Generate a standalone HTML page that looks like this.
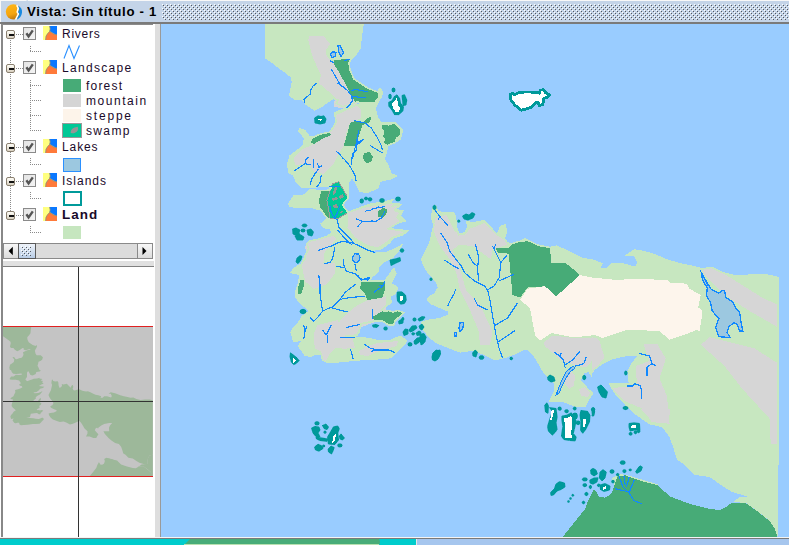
<!DOCTYPE html>
<html><head><meta charset="utf-8">
<style>
*{margin:0;padding:0;box-sizing:border-box}
html,body{width:789px;height:545px;overflow:hidden;background:#fff;font-family:"Liberation Sans",sans-serif;position:relative}
.abs{position:absolute}
#title{left:0;top:0;width:789px;height:22px;background:#c4d4e8;border-top:1px solid #f8f8f8;border-left:1px solid #f8f8f8}
#tline{left:0;top:22px;width:789px;height:2px;background:#7a7a7a}
#ttext{left:27px;top:4px;font-weight:bold;font-size:12px;letter-spacing:0.66px;transform:scaleX(1.1);transform-origin:0 0;color:#000;white-space:nowrap;line-height:16px}
#dots{left:162px;top:4px;width:627px;height:17px;
 background-image:radial-gradient(circle,#808890 0.9px,transparent 1.1px),radial-gradient(circle,#808890 0.9px,transparent 1.1px);
 background-size:4px 4px,4px 4px;background-position:0 0,2px 2px}
#left{left:0;top:24px;width:155px;height:514px;background:#fff}
#lborder{left:1px;top:24px;width:2px;height:514px;background:#888}
#split{left:155px;top:24px;width:5px;height:514px;background:#dedede}
#splitl{left:160px;top:24px;width:1px;height:514px;background:#9a9a9a}
.t{position:absolute;font-size:12px;color:#1a0a2a;white-space:nowrap;line-height:14px}
.chk{position:absolute;width:13px;height:13px;border:1px solid #8a8a8a;background:linear-gradient(135deg,#e4e4e4,#f4f4f4)}
.exp{position:absolute;width:9px;height:9px;border:1px solid #8a8070;border-radius:2px;background:linear-gradient(#fffef8,#d8d0c0)}
.exp:after{content:"";position:absolute;left:1.5px;top:3px;width:5px;height:1.5px;background:#111}
.lic{position:absolute;width:14px;height:14px}
.sw{position:absolute;width:18px;height:13px}
#bottom{left:0;top:539px;width:789px;height:6px;background:#00cccc}
#bline{left:0;top:537px;width:789px;height:2px;background:#7a7a7a;border-top:1px solid #f4f4f4}
</style></head><body>
<div id="title" class="abs"></div>
<svg class="abs" style="left:0;top:0" width="28" height="24" viewBox="0 0 28 24">
 <defs><linearGradient id="og" x1="0" y1="0" x2="0.3" y2="1"><stop offset="0" stop-color="#ffb818"/><stop offset="0.7" stop-color="#f5a510"/><stop offset="1" stop-color="#c88010"/></linearGradient></defs>
 <circle cx="13.4" cy="11.8" r="7.6" fill="url(#og)"/>
 <path d="M17,4.5 Q23.5,8 22.3,13 Q21.2,18.5 15.6,20.3 L22,24 L28,0Z" fill="#c4d4e8"/>
 <path d="M16.6,5.2 Q19.3,8 17.6,10.6 Q16.6,12.4 18.6,13.6 L15.6,19.6" stroke="#fff" stroke-width="1.6" fill="none"/>
 <path d="M18,5.6 Q22.6,8.2 22,12.8 Q21.4,17.6 16.6,19.8 L19.4,14.2 Q18.8,13 18.2,12.6 Q17.8,12 18.8,10.4 Q19.6,8.2 18,5.6Z" fill="#1a8ae0"/>
</svg>
<div id="ttext" class="abs">Vista: Sin título - 1</div>
<svg class="abs" style="left:161px;top:4px" width="628" height="16" shape-rendering="crispEdges">
 <defs><pattern id="dp" width="4" height="4" patternUnits="userSpaceOnUse">
  <rect x="1" y="0" width="1" height="1" fill="#fff"/><rect x="2" y="1" width="1" height="1" fill="#55585c"/>
  <rect x="3" y="2" width="1" height="1" fill="#fff"/><rect x="0" y="3" width="1" height="1" fill="#55585c"/>
 </pattern></defs>
 <rect x="1" y="0" width="627" height="16" fill="url(#dp)"/>
</svg>
<div id="tline" class="abs"></div>
<div id="left" class="abs"></div>
<div id="lborder" class="abs"></div>
<div class="abs" style="left:1px;top:24px;width:152px;height:1px;background:#8a8a8a"></div>

<div id="toc" class="abs" style="left:0;top:0;width:155px;height:260px">
<svg class="abs" style="left:0;top:0" width="155" height="260" shape-rendering="crispEdges">
 <defs>
  <pattern id="vd" width="1" height="2" patternUnits="userSpaceOnUse"><rect x="0" y="0" width="1" height="1" fill="#8a8a8a"/></pattern>
  <pattern id="hd" width="2" height="1" patternUnits="userSpaceOnUse"><rect x="0" y="0" width="1" height="1" fill="#8a8a8a"/></pattern>
 </defs>
 <rect x="10" y="39" width="1" height="172" fill="url(#vd)"/>
 <!-- expander to checkbox -->
 <rect x="15" y="34" width="8" height="1" fill="url(#hd)"/>
 <rect x="15" y="68" width="8" height="1" fill="url(#hd)"/>
 <rect x="15" y="147" width="8" height="1" fill="url(#hd)"/>
 <rect x="15" y="181" width="8" height="1" fill="url(#hd)"/>
 <rect x="15" y="215" width="8" height="1" fill="url(#hd)"/>
 <!-- legend connectors -->
 <rect x="30" y="45" width="1" height="7" fill="url(#vd)"/><rect x="30" y="51" width="12" height="1" fill="url(#hd)"/>
 <rect x="30" y="79" width="1" height="52" fill="url(#vd)"/>
 <rect x="30" y="85" width="12" height="1" fill="url(#hd)"/>
 <rect x="30" y="100" width="12" height="1" fill="url(#hd)"/>
 <rect x="30" y="115" width="12" height="1" fill="url(#hd)"/>
 <rect x="30" y="130" width="12" height="1" fill="url(#hd)"/>
 <rect x="30" y="158" width="1" height="7" fill="url(#vd)"/><rect x="30" y="164" width="12" height="1" fill="url(#hd)"/>
 <rect x="30" y="192" width="1" height="7" fill="url(#vd)"/><rect x="30" y="198" width="12" height="1" fill="url(#hd)"/>
 <rect x="30" y="226" width="1" height="7" fill="url(#vd)"/><rect x="30" y="232" width="12" height="1" fill="url(#hd)"/>
</svg>
<div class="exp" style="left:6px;top:30px"></div>
<div class="chk" style="left:23px;top:27px"><svg width="11" height="11" style="position:absolute;left:0;top:0"><path d="M2.4 5.2 L4.6 8.4 L8.8 2.4" stroke="#555" stroke-width="2.4" fill="none"/></svg></div>
<svg class="lic" style="left:43px;top:26px" width="14" height="14" viewBox="0 0 14 14"><rect width="14" height="14" fill="#ffff80"/><path d="M6.6 0H14V9L10.5 7.6L8.2 6L6.6 5.2L7.2 3Z" fill="#0a78ff"/><path d="M2.6 14 L3 10.2 L4.6 7.6 L6.6 5.6 L8.2 6.2 L10.5 7.8 L14 9 V14Z" fill="#ff7a3a"/><path d="M2.6 14 L3 10.2 L4.6 7.6 L6.6 5.6 L7.2 3 L6.6 0 M6.6 5.6 L8.2 6.2 L10.5 7.8 L14 9" stroke="#8a8a7a" stroke-width="0.8" fill="none"/></svg>
<div class="t" style="left:62px;top:27px;font-weight:normal;letter-spacing:0.75px">Rivers</div>
<div class="exp" style="left:6px;top:64px"></div>
<div class="chk" style="left:23px;top:61px"><svg width="11" height="11" style="position:absolute;left:0;top:0"><path d="M2.4 5.2 L4.6 8.4 L8.8 2.4" stroke="#555" stroke-width="2.4" fill="none"/></svg></div>
<svg class="lic" style="left:43px;top:60px" width="14" height="14" viewBox="0 0 14 14"><rect width="14" height="14" fill="#ffff80"/><path d="M6.6 0H14V9L10.5 7.6L8.2 6L6.6 5.2L7.2 3Z" fill="#0a78ff"/><path d="M2.6 14 L3 10.2 L4.6 7.6 L6.6 5.6 L8.2 6.2 L10.5 7.8 L14 9 V14Z" fill="#ff7a3a"/><path d="M2.6 14 L3 10.2 L4.6 7.6 L6.6 5.6 L7.2 3 L6.6 0 M6.6 5.6 L8.2 6.2 L10.5 7.8 L14 9" stroke="#8a8a7a" stroke-width="0.8" fill="none"/></svg>
<div class="t" style="left:62px;top:61px;font-weight:normal;letter-spacing:1.3px">Landscape</div>
<div class="exp" style="left:6px;top:143px"></div>
<div class="chk" style="left:23px;top:140px"><svg width="11" height="11" style="position:absolute;left:0;top:0"><path d="M2.4 5.2 L4.6 8.4 L8.8 2.4" stroke="#555" stroke-width="2.4" fill="none"/></svg></div>
<svg class="lic" style="left:43px;top:139px" width="14" height="14" viewBox="0 0 14 14"><rect width="14" height="14" fill="#ffff80"/><path d="M6.6 0H14V9L10.5 7.6L8.2 6L6.6 5.2L7.2 3Z" fill="#0a78ff"/><path d="M2.6 14 L3 10.2 L4.6 7.6 L6.6 5.6 L8.2 6.2 L10.5 7.8 L14 9 V14Z" fill="#ff7a3a"/><path d="M2.6 14 L3 10.2 L4.6 7.6 L6.6 5.6 L7.2 3 L6.6 0 M6.6 5.6 L8.2 6.2 L10.5 7.8 L14 9" stroke="#8a8a7a" stroke-width="0.8" fill="none"/></svg>
<div class="t" style="left:62px;top:140px;font-weight:normal;letter-spacing:0.9px">Lakes</div>
<div class="exp" style="left:6px;top:177px"></div>
<div class="chk" style="left:23px;top:174px"><svg width="11" height="11" style="position:absolute;left:0;top:0"><path d="M2.4 5.2 L4.6 8.4 L8.8 2.4" stroke="#555" stroke-width="2.4" fill="none"/></svg></div>
<svg class="lic" style="left:43px;top:173px" width="14" height="14" viewBox="0 0 14 14"><rect width="14" height="14" fill="#ffff80"/><path d="M6.6 0H14V9L10.5 7.6L8.2 6L6.6 5.2L7.2 3Z" fill="#0a78ff"/><path d="M2.6 14 L3 10.2 L4.6 7.6 L6.6 5.6 L8.2 6.2 L10.5 7.8 L14 9 V14Z" fill="#ff7a3a"/><path d="M2.6 14 L3 10.2 L4.6 7.6 L6.6 5.6 L7.2 3 L6.6 0 M6.6 5.6 L8.2 6.2 L10.5 7.8 L14 9" stroke="#8a8a7a" stroke-width="0.8" fill="none"/></svg>
<div class="t" style="left:62px;top:174px;font-weight:normal;letter-spacing:1.0px">Islands</div>
<div class="exp" style="left:6px;top:211px"></div>
<div class="chk" style="left:23px;top:208px"><svg width="11" height="11" style="position:absolute;left:0;top:0"><path d="M2.4 5.2 L4.6 8.4 L8.8 2.4" stroke="#555" stroke-width="2.4" fill="none"/></svg></div>
<svg class="lic" style="left:43px;top:207px" width="14" height="14" viewBox="0 0 14 14"><rect width="14" height="14" fill="#ffff80"/><path d="M6.6 0H14V9L10.5 7.6L8.2 6L6.6 5.2L7.2 3Z" fill="#0a78ff"/><path d="M2.6 14 L3 10.2 L4.6 7.6 L6.6 5.6 L8.2 6.2 L10.5 7.8 L14 9 V14Z" fill="#ff7a3a"/><path d="M2.6 14 L3 10.2 L4.6 7.6 L6.6 5.6 L7.2 3 L6.6 0 M6.6 5.6 L8.2 6.2 L10.5 7.8 L14 9" stroke="#8a8a7a" stroke-width="0.8" fill="none"/></svg>
<div class="t" style="left:62px;top:208px;font-weight:bold;letter-spacing:0.9px;transform:scaleX(1.12);transform-origin:0 0">Land</div>
<svg class="abs" style="left:62px;top:44px" width="20" height="16"><path d="M2 14.5 L7 1.5 L12 14.5 L17.5 1.5" stroke="#2a90ff" stroke-width="1.1" fill="none"/></svg>
<div class="sw" style="left:63px;top:79px;background:#47ab77"></div>
<div class="t" style="left:86px;top:79px;letter-spacing:1.2px">forest</div>
<div class="sw" style="left:63px;top:94px;background:#d5d5d5"></div>
<div class="t" style="left:86px;top:94px;letter-spacing:1.55px">mountain</div>
<div class="sw" style="left:63px;top:109px;background:#fdf4ea"></div>
<div class="t" style="left:86px;top:109px;letter-spacing:1.8px">steppe</div>
<div class="abs" style="left:62px;top:123px;width:20px;height:15px;background:#00c896;border:1px solid #9a9a9a"></div>
<svg class="abs" style="left:62px;top:123px" width="20" height="15"><path d="M8.6 9.8 Q8.4 4.8 15.8 3.8 Q17 8.4 13 9.8 Q10.6 10.8 8.6 9.8Z" fill="#959595"/><path d="M7 15 Q9 13.2 11 15Z" fill="#959595"/></svg>
<div class="t" style="left:86px;top:124px;letter-spacing:1.35px">swamp</div>
<div class="abs" style="left:63px;top:158px;width:18px;height:14px;background:#9cc8e0;border:1px solid #2a90ff"></div>
<div class="abs" style="left:63px;top:191px;width:19px;height:15px;border:2px solid #009a9a;background:#fff"></div>
<div class="sw" style="left:63px;top:226px;background:#c6e6bf"></div>
</div>
<svg class="abs" style="left:161px;top:24px" width="628" height="513" viewBox="161 24 628 513" shape-rendering="crispEdges">
<style>.land,.nc{fill:#c7e7c0}.mtn{fill:#d6d6d6}.for{fill:#47ab77}.swp{fill:#00c896;stroke:#9a9a9a;stroke-width:1}.stp{fill:#fdf5ec}.lake{fill:#9cc8e0;stroke:#1188ff;stroke-width:1.3}.riv{fill:none;stroke:#1188ff;stroke-width:1.15;stroke-linejoin:round}.coast{fill:none;stroke:#c7e7c0;stroke-width:1.6}.isl{fill:#fff;stroke:#00999a;stroke-width:3.2;stroke-linejoin:round}.isd{fill:#00999a;stroke:#00999a;stroke-width:0.9;stroke-linejoin:round}</style>
<rect x="161" y="24" width="628" height="513" fill="#99ccff"/>
<path class="land" d="M265.5,24 L363,24 L361,38 L360,48 L356,54 L351,59 L349,63 L350,70 L354,79 L360,83 L367.5,88 L377.5,92 L380,88.5 L382.5,92 L381,97 L377.5,103 L375,108 L377.5,118 L381,123 L395,123 L402.5,130.5 L400,139 L394,143 L387.5,145.5 L386,153 L384,159 L387.5,165 L391,173.75 L396,176 L391,178.75 L380,181 L378,187.5 L367.5,192.5 L360,191.25 L355,181.25 L352,177 L348.1,183 L348.1,198 L342.5,205 L348.1,212.5 L357.5,208.75 L367.5,205 L371,204 L382.5,202.5 L392.5,200 L390,203 L401,204.4 L395,209.4 L402.5,211 L400,216 L405,221 L398.75,222.5 L388.75,228.75 L401,230 L407.5,231 L402.5,235 L392.5,238 L390,242.5 L381,248.75 L370,250.6 L373.75,253.5 L386.25,252.5 L395,249 L401.25,245.5 L398.75,250 L392.5,257.5 L382.5,262.5 L377.5,267.5 L378.75,271 L371,277.5 L370,281 L385,281 L393.75,268.75 L396,273.75 L392.5,280 L391.25,283.75 L397.5,287.5 L395,293.75 L390,296.25 L391.25,302.5 L383.75,307.5 L381.25,310 L385,311.25 L388.75,310.6 L392.5,312 L397.5,310.6 L403.75,312.5 L400,316.25 L395,321 L393.75,325 L388.75,325 L382.5,321 L373.75,321.25 L361.25,323.75 L358.75,332.5 L357,335 L345,336.25 L357.5,337.5 L370,338.75 L377.5,340.6 L388.75,341.25 L397.5,337.5 L400,336.25 L403.75,338.75 L406.25,341.25 L403.75,345 L398.75,350 L395,353.75 L391.25,357.5 L377.5,358.75 L367.5,358.75 L357.5,360 L350,360.6 L337.5,361.9 L327.5,362.5 L322.5,360 L321.25,353.75 L315,354.4 L310,356.25 L305,355 L298.75,346.25 L302.5,340 L293.75,341.25 L291.25,332.5 L293.75,327.5 L298.75,322.5 L302.5,316.25 L310,311 L300,302.5 L295.6,296.8 L296.25,290 L298.75,282.5 L300,275 L297.5,273.75 L291.25,272.5 L293.75,268.75 L301.8,263.75 L304.4,257.5 L308.75,248.75 L306.8,243.75 L310,241 L317.5,239.4 L327.5,236.25 L332.5,232.5 L330,228.75 L323.75,227.5 L321.25,223.75 L327.5,218.75 L323.75,213.75 L321.25,210 L310,206.9 L298.75,207.5 L290,206.25 L288.75,203.75 L293.75,196.25 L302.5,196.25 L310,190 L321.25,190.6 L329,190.2 L331,188 L329,186 L311.25,187 L301.25,186.8 L296.25,181.25 L293.75,175 L289,172.5 L287.5,162.5 L288.3,164.4 L289.9,156.2 L296.5,151.2 L303.1,146.2 L304.8,138 L299,131.4 L299.8,128.9 L304.8,130.5 L308.9,136.3 L313,137.1 L321.3,133.8 L329.6,132.2 L332.9,128 L336.2,121.4 L334.5,113.2 L349,106.5 L361,104 L357.7,101.6 L349.4,104.9 L342.8,106.6 L336.2,103.3 L337.9,100 L332.9,98.3 L328,101.6 L322,106 L314.7,109.9 L306.4,104.4 L301.8,98.9 L294.4,98.9 L289.9,95.2 L290.8,89.7 L292.6,82.4 L291.7,76.9 L284.4,71.4 L277,65.9 L272.4,62.2 L265.5,57.6 L265.5,24Z"/>
<path class="mtn" d="M309.1,35.6 L323.8,36.5 L330.2,43.9 L325.5,51 L327,57 L333,63 L341.25,70.5 L348.75,83 L355,95.5 L357.5,105.5 L341.25,108 L333.75,106.75 L335,98 L327.5,90.5 L318.75,83 L321,75 L317.4,67.7 L311.9,54.9 L308.2,40.2Z"/>
<path class="mtn" d="M330,133 L335,123 L335,115.5 L357.5,105.5 L361.25,110.5 L361.25,118 L356.25,120.5 L350,123 L346.25,133 L343.75,145.5 L338,155 L333,165 L324,173.75 L315,172.5 L307.5,163.75 L295,165 L294,158 L301,150 L316.25,143Z"/>
<path class="mtn" d="M348.1,212.5 L357.5,210 L367.5,207 L382.5,205 L395,203 L390,207 L398,206 L393,211 L399,213 L396,218 L401,222 L386,229 L398,231 L404,232 L392,237 L386,242 L378,247.5 L367.5,245 L355,237.5 L347.5,227.5Z"/>
<path class="mtn" d="M307.8,242.2 L333.6,235.8 L336.8,239 L324.6,251.9 L323.3,263.4 L334.8,263.4 L335.5,272.4 L327.1,284 L313.6,289.1 L305.3,281.4 L301.4,264.7 L306.6,258.3 L305.3,246.7Z"/>
<path class="mtn" d="M378,298.75 L367.5,300 L357.5,305 L345,315 L338.75,322.5 L337.5,320 L317.5,325 L314,333 L313.75,340 L315,348.75 L321.25,351.25 L322.5,360 L326.25,361 L328.75,355 L335,348 L345,348.75 L355,347.5 L352.5,338.75 L357.5,332.5 L361,327.5 L370,323.75 L378,321 L386.25,312 L386.25,296.25Z"/>
<path class="mtn" d="M358.75,351.25 L367.5,346.25 L377.5,343 L390,341.9 L398.75,340.6 L396.25,346.25 L386.25,348.75 L376.25,352 L367.5,356.25 L360,354.4Z"/>
<path class="for" d="M333.75,60.5 L342.5,59.25 L348.75,59.25 L350,70.5 L354,79.25 L367.5,88 L377.5,92 L377.5,98 L373.75,102.5 L355,101.75 L351,95.5 L345,83 L338.75,71.75 L333.75,64.25Z"/>
<path class="for" d="M356.25,120.5 L362.5,123 L367.5,118 L371.25,117 L370,122 L362.5,125 L360,133 L355,145.5 L343.75,145.5 L347.5,133 L350,123Z"/>
<path class="for" d="M312,139 L321.3,134.3 L329.6,132.7 L331,135 L322,139 L314,144 L311,143Z"/>
<path class="for" d="M382.5,124.8 L389.1,125.6 L395.7,123.1 L400.7,127.2 L399.8,134.7 L395.7,138 L394,143 L389.1,145.4 L384.1,143 L385,139 L383.3,136.3 L384.5,131 L382,128Z"/>
<path class="for" d="M364,153 L370,152 L373,157 L371,162 L366,163 L363,158Z"/>
<path class="for" d="M321.25,191.25 L330,190.6 L326.9,200 L330,218 L327.5,218.75 L323.75,213.75 L321.25,210 L318.75,201.9 L320,196.25Z"/>
<path class="swp" d="M332.5,183.75 L338.75,181.9 L348.1,198 L342.5,205 L348.1,212.5 L337.5,218.75 L330,218 L326.9,200Z"/>
<path fill="#959595" d="M334,188 L338,186 L336,192 L333,195Z M331,199 L336,197 L338,199 L333,201Z M339,196 L343,194 L344,197 L340,199Z M333,205 L337,204 L338,208 L334,208Z M339,212 L343,211 L341,214Z"/>
<path class="for" d="M379,210.5 L383,208 L386.5,209 L387,212.5 L385,216 L382,218 L378,216.5 L377.5,213Z"/>
<path class="for" d="M361.25,282.5 L385,281.25 L385,290 L382.5,297.5 L367.5,300 L365,293.75 L360,288.75Z"/>
<path class="for" d="M300,280 L304.4,280.6 L303.75,286.25 L301.25,293.75 L297.5,294.4 L297.5,287.5Z"/>
<path class="for" d="M372.5,317 L382.5,311 L385,311.25 L388.75,310.6 L392.5,312 L397.5,310.6 L403.75,312.5 L400,316.25 L395,321 L393.75,325 L388.75,325 L382.5,321 L373.75,320Z"/>
<path class="land" d="M433.2,207.4 L435.6,205.8 L437.3,211.6 L444.7,213.2 L452.1,212.4 L453,212.4 L455.4,216.5 L456.3,226.4 L458.7,234.7 L464.5,233 L467.8,228 L467,221.5 L472.8,223.1 L484.3,220.6 L490.9,228 L497.5,234.7 L500.8,226.4 L505,224.8 L506.6,232.2 L504.1,238 L507.4,243 L511.25,243.75 L520,241.25 L525,238.75 L537.5,245 L550,247.5 L556.25,246.25 L565,250 L575,255 L582.5,258.75 L592,260 L602,263.75 L599.5,268.75 L607,268.75 L612,263.75 L622,263.75 L635.75,267.5 L638.25,262.5 L634.5,255 L627,255 L634.5,250 L642,251.25 L652,253.75 L667,260 L679.5,263.75 L692,266.25 L702,268.75 L712,267.5 L722,272.5 L737,276.25 L752,275 L767,275 L778.25,277.5 L778.25,464 L767.25,466.4 L762.3,474 L759.8,484 L761,494 L749.8,496.3 L732.4,491.3 L722.4,485 L710,476.4 L695,474 L685,464 L677.5,459 L673.75,446.5 L670,436.5 L662.5,426.5 L649.5,423.5 L637,414.75 L627,406 L614.5,392.25 L609.5,383.5 L629.5,383.5 L628.25,371 L632,363.5 L639.5,354.75 L629.5,354.75 L612,358.5 L602,363.5 L592,371 L591.25,375 L588.75,371.25 L583.75,372.5 L580,380 L587.5,388.75 L592.5,393.5 L587.5,401 L585,406 L575,406 L562.5,401 L550,401 L555,391 L555,383.5 L545,373.5 L542.5,369.75 L537.5,361 L532.5,353.5 L527.5,348.5 L522.5,349.75 L515,353.5 L505,357.25 L495,359.75 L482.5,353.5 L473.4,350 L460.6,351.7 L455,350 L445.9,346.2 L436.7,342.6 L429.4,337 L423.9,329.7 L422,322.4 L427.5,320.6 L440.4,318.7 L448.6,315 L449.5,311.4 L443.1,308.6 L438.5,306.8 L430.3,303.1 L427.5,299.4 L429.4,296.7 L434.9,294 L438.5,287.5 L436.7,282 L429.4,273.8 L424.8,267.3 L422,260 L421.6,259.4 L424.9,252.8 L429.9,242.9 L434,224.8 L431.5,218.2Z"/>
<path class="mtn" d="M434.8,218.2 L446.4,214.9 L454.6,231.4 L464.5,235.5 L469.5,228.9 L484.3,223.1 L494.2,233 L504.1,239.6 L507.4,244.6 L497.5,247.9 L492.6,249.5 L490.9,259.4 L484.3,254.5 L472.8,246.2 L459.6,244.6 L452,250 L458,263 L462,276 L466,290 L480,305 L492.5,331.25 L490,345 L480,345 L478.75,331.25 L470,310 L460,290 L456.3,272.6 L449.7,259.4 L439.8,246.2 L434,232Z"/>
<path class="for" d="M495,247.5 L508.75,247.5 L513.75,242.5 L527.5,241.25 L535,243.75 L537.5,246.25 L550,247.5 L551.25,262.5 L565,262.5 L578.75,273.75 L578.75,283.75 L556.25,296.25 L545,286.25 L527.5,287.5 L520,297.5 L512.5,295 L510,267.5 L508.75,253.75 L497.5,252.5Z"/>
<path class="stp" d="M520,300 L527.5,288.75 L545,286.25 L556.25,296.25 L580,275 L592,277.5 L617,280 L634.5,278.75 L667,280 L669.5,282.5 L687,283.75 L689.5,288.75 L700.75,295 L698.25,307.5 L702,310 L702.5,313 L699.5,331.25 L697,329.75 L684.5,334.75 L669.5,339.75 L659.5,331 L627,329.75 L602.5,338 L595,335 L573.75,337.5 L551.25,333 L540,340.6 L535,335 L530,308Z"/>
<path class="mtn" d="M543.75,342.5 L552.5,335.6 L573.75,338 L596.25,337.5 L600,342.5 L597.5,353.75 L588.75,365 L585,367.5 L575,365 L562.5,361.25 L552.5,352.5 L545,346.25Z"/>
<path class="mtn" d="M643.25,343.5 L657,343.5 L665.75,358.5 L659.5,378.5 L667,396 L669.5,423.5 L652,422.25 L642,408.5 L624.5,401 L612,388 L637,386 L635.75,366 L649.5,361Z"/>
<path class="mtn" d="M700.75,344.75 L709.5,337.25 L754.5,348.5 L778.25,363.5 L778.25,443.5 L770.75,443.5 L769.5,418.5 L742,388.5 L724.5,366Z"/>
<path class="mtn" d="M702,270 L712,267.5 L722,272.5 L742,285 L762,297.5 L778.25,305 L778.25,327.5 L752,312.5 L732,300 L717,287.5 L704.5,275Z"/>
<path class="mtn" d="M565,374 L571,371 L575,376 L574,386 L569,389 L565,384Z"/>
<path class="mtn" d="M579,389 L586,387 L591,391 L588,397 L581,396Z"/>
<path class="mtn" d="M640,409 L670,409 L668.75,424 L650,419Z"/>
<path class="mtn" d="M592,337.25 L599.5,341 L604.5,357.25 L592,373.5Z"/>
<path class="lake" d="M701.6,273.2 L708.2,284.7 L711.5,289.7 L718.9,293 L722.2,290.5 L724.7,290.5 L725.5,297.1 L732.9,302 L735.4,307.8 L739.5,311.9 L741.2,322.7 L742.8,330.9 L739.5,330.9 L737,324.3 L733.7,322.7 L728.8,326.8 L727.1,332.6 L730.4,337.5 L718.9,336.7 L715.6,327.6 L718.9,318.5 L712.3,311.1 L710.6,302.9 L706.5,295.4 L707.3,288 L702.4,279.8Z"/>
<path class="land nc" d="M759.8,484 L761,494 L749.8,496.3 L740,497 L733,502 L746,503 L757,511 L770,521 L777.3,536 L778.25,536 L778.25,464 L767.25,466.4 L762.3,474Z"/>
<path class="land nc" d="M612,478 L620,474 L630,476 L640,479 L650,482 L658,484.5 L657.5,487 L647.5,484.7 L635,481 L625,477.5 L615,487Z"/>
<path class="for ov" d="M562.5,537 L575,521.5 L585,509 L588.75,499 L593.75,489 L596.25,491.5 L598.75,496.5 L605,497.75 L611.25,494 L615,484 L617.5,476.5 L625,475.25 L635,479 L647.5,482.75 L657.5,485.25 L670,496.5 L690,504 L710,509 L720,510 L725,507.6 L731.1,503.3 L746.1,503.3 L757.3,511.3 L769.8,521.3 L774.8,528.8 L777.3,537Z"/>
<path class="isl" d="M510.6,94.4 L512.2,93.3 L514.4,95.2 L519,92.5 L525,92.2 L530.4,92.2 L535.7,92.5 L539.5,93.3 L540.3,90.3 L543.3,89.9 L545.6,92.9 L549.4,94.8 L547.1,97.1 L543.7,98.3 L542.6,104.3 L539.5,105.5 L538.4,102.4 L535.7,102.4 L530.4,107.4 L524.3,109.3 L521.3,110 L515.2,105.1 L511.4,100.5 L510.3,98.3Z"/>
<path class="coast" d="M265.5,24 L363,24 L361,38 L360,48 L356,54 L351,59 L349,63 L350,70 L354,79 L360,83 L367.5,88 L377.5,92 L380,88.5 L382.5,92 L381,97 L377.5,103 L375,108 L377.5,118 L381,123 L395,123 L402.5,130.5 L400,139 L394,143 L387.5,145.5 L386,153 L384,159 L387.5,165 L391,173.75 L396,176 L391,178.75 L380,181 L378,187.5 L367.5,192.5 L360,191.25 L355,181.25 L352,177 L348.1,183 L348.1,198 L342.5,205 L348.1,212.5 L357.5,208.75 L367.5,205 L371,204 L382.5,202.5 L392.5,200 L390,203 L401,204.4 L395,209.4 L402.5,211 L400,216 L405,221 L398.75,222.5 L388.75,228.75 L401,230 L407.5,231 L402.5,235 L392.5,238 L390,242.5 L381,248.75 L370,250.6 L373.75,253.5 L386.25,252.5 L395,249 L401.25,245.5 L398.75,250 L392.5,257.5 L382.5,262.5 L377.5,267.5 L378.75,271 L371,277.5 L370,281 L385,281 L393.75,268.75 L396,273.75 L392.5,280 L391.25,283.75 L397.5,287.5 L395,293.75 L390,296.25 L391.25,302.5 L383.75,307.5 L381.25,310 L385,311.25 L388.75,310.6 L392.5,312 L397.5,310.6 L403.75,312.5 L400,316.25 L395,321 L393.75,325 L388.75,325 L382.5,321 L373.75,321.25 L361.25,323.75 L358.75,332.5 L357,335 L345,336.25 L357.5,337.5 L370,338.75 L377.5,340.6 L388.75,341.25 L397.5,337.5 L400,336.25 L403.75,338.75 L406.25,341.25 L403.75,345 L398.75,350 L395,353.75 L391.25,357.5 L377.5,358.75 L367.5,358.75 L357.5,360 L350,360.6 L337.5,361.9 L327.5,362.5 L322.5,360 L321.25,353.75 L315,354.4 L310,356.25 L305,355 L298.75,346.25 L302.5,340 L293.75,341.25 L291.25,332.5 L293.75,327.5 L298.75,322.5 L302.5,316.25 L310,311 L300,302.5 L295.6,296.8 L296.25,290 L298.75,282.5 L300,275 L297.5,273.75 L291.25,272.5 L293.75,268.75 L301.8,263.75 L304.4,257.5 L308.75,248.75 L306.8,243.75 L310,241 L317.5,239.4 L327.5,236.25 L332.5,232.5 L330,228.75 L323.75,227.5 L321.25,223.75 L327.5,218.75 L323.75,213.75 L321.25,210 L310,206.9 L298.75,207.5 L290,206.25 L288.75,203.75 L293.75,196.25 L302.5,196.25 L310,190 L321.25,190.6 L329,190.2 L331,188 L329,186 L311.25,187 L301.25,186.8 L296.25,181.25 L293.75,175 L289,172.5 L287.5,162.5 L288.3,164.4 L289.9,156.2 L296.5,151.2 L303.1,146.2 L304.8,138 L299,131.4 L299.8,128.9 L304.8,130.5 L308.9,136.3 L313,137.1 L321.3,133.8 L329.6,132.2 L332.9,128 L336.2,121.4 L334.5,113.2 L349,106.5 L361,104 L357.7,101.6 L349.4,104.9 L342.8,106.6 L336.2,103.3 L337.9,100 L332.9,98.3 L328,101.6 L322,106 L314.7,109.9 L306.4,104.4 L301.8,98.9 L294.4,98.9 L289.9,95.2 L290.8,89.7 L292.6,82.4 L291.7,76.9 L284.4,71.4 L277,65.9 L272.4,62.2 L265.5,57.6 L265.5,24Z"/><path class="coast" d="M433.2,207.4 L435.6,205.8 L437.3,211.6 L444.7,213.2 L452.1,212.4 L453,212.4 L455.4,216.5 L456.3,226.4 L458.7,234.7 L464.5,233 L467.8,228 L467,221.5 L472.8,223.1 L484.3,220.6 L490.9,228 L497.5,234.7 L500.8,226.4 L505,224.8 L506.6,232.2 L504.1,238 L507.4,243 L511.25,243.75 L520,241.25 L525,238.75 L537.5,245 L550,247.5 L556.25,246.25 L565,250 L575,255 L582.5,258.75 L592,260 L602,263.75 L599.5,268.75 L607,268.75 L612,263.75 L622,263.75 L635.75,267.5 L638.25,262.5 L634.5,255 L627,255 L634.5,250 L642,251.25 L652,253.75 L667,260 L679.5,263.75 L692,266.25 L702,268.75 L712,267.5 L722,272.5 L737,276.25 L752,275 L767,275 L778.25,277.5 L778.25,464 L767.25,466.4 L762.3,474 L759.8,484 L761,494 L749.8,496.3 L732.4,491.3 L722.4,485 L710,476.4 L695,474 L685,464 L677.5,459 L673.75,446.5 L670,436.5 L662.5,426.5 L649.5,423.5 L637,414.75 L627,406 L614.5,392.25 L609.5,383.5 L629.5,383.5 L628.25,371 L632,363.5 L639.5,354.75 L629.5,354.75 L612,358.5 L602,363.5 L592,371 L591.25,375 L588.75,371.25 L583.75,372.5 L580,380 L587.5,388.75 L592.5,393.5 L587.5,401 L585,406 L575,406 L562.5,401 L550,401 L555,391 L555,383.5 L545,373.5 L542.5,369.75 L537.5,361 L532.5,353.5 L527.5,348.5 L522.5,349.75 L515,353.5 L505,357.25 L495,359.75 L482.5,353.5 L473.4,350 L460.6,351.7 L455,350 L445.9,346.2 L436.7,342.6 L429.4,337 L423.9,329.7 L422,322.4 L427.5,320.6 L440.4,318.7 L448.6,315 L449.5,311.4 L443.1,308.6 L438.5,306.8 L430.3,303.1 L427.5,299.4 L429.4,296.7 L434.9,294 L438.5,287.5 L436.7,282 L429.4,273.8 L424.8,267.3 L422,260 L421.6,259.4 L424.9,252.8 L429.9,242.9 L434,224.8 L431.5,218.2Z"/><g class="riv">
<path d="M316.5,83.3 L313,86 L311,89.7 L310,94.3 L304.5,98.9 L302.7,99.3 M304.5,98.9 L304.5,102.6"/>
<path d="M331.25,69.25 L335,75.5 L340,84.25 L347.5,90.5 L351.25,95.5 L352.5,100.5 L350,104.25 L346.25,108 M337.5,83 L342.5,86.75 M351,91 L355,89.25 L367.5,91.75 M352,97 L355,96.75 L366.25,98 M330,60.5 L333.75,63 M343.75,60.5 L350,59.25"/>
<path d="M353.75,120.5 L365,123 L371.25,128 L377.5,138 L381.25,145.5 L382.5,150.5 M358.75,130.5 L356.25,143 L353.75,153 L352.5,159.25 M356.25,143 L363.75,139.25 M370,145.5 L382.5,153 M337.5,151.75 L343.75,159.25"/>
<path d="M294.4,170.6 L301.25,166.25 L305,163.75 L306.25,158.75 L308.75,157.5 M305,163.75 L311.25,165 M313.75,158.75 L313.75,167.5 M317.5,163 L318.75,167.5 L322.5,165.6 M318.75,168.75 L315,173.75 L311.25,180 L310.6,185 M321.25,175 L320,182.5 L316.9,186.9"/>
<path d="M336.25,151.25 L345,160 L350,166.25 L355,175 L356.25,181.25 M357.5,140 L356.25,150 L352.5,153.75 L351.25,165 M357,145 L363,140"/>
<path d="M328.75,186.25 L340,186.25 M330,206.25 L331.25,212.5 L333.75,217.5 L337.5,220 L338.75,227.5 L345,233.75 L351.25,240 L353.75,243 M340,205 L337.5,212.5 L335,217.5 M337.5,230 L346.25,240 L352,245"/>
<path d="M365,211.25 L368,210.5 L371.25,210 L373,208.5 L375,208.75 L378,207 L381.25,207.5 L385,206.25 M355.6,218.75 L359,220 L362.5,221.25 L367.5,221.9 L372,221 L376.25,221.25 L381.25,218 L383,215 L385,211.25 M357.5,226.9 L360,224 L362.5,221.25"/>
<path d="M318,250.6 L325,248 L332.5,245.6 L338.75,242.5 L342.5,241.25 L352.5,243 L357.5,245 L367.5,250 L375,252.5 M335,247.5 L333.75,252.5 L332.5,258.75 L330,262.5 L323.75,263.75"/>
<path d="M343.75,258.75 L343.75,265 L346.25,271.25 L355,273.75 L360,278.75 L367.5,280 L370,277.5 M336.25,266.25 L343.75,267.5 M355,264 L356.25,271.25"/>
<path d="M318.75,275 L320,285 L320,293.75 L321.25,302.5 L322.5,311.25 L317.5,317.5 L313.75,321.25 L310,317.5 M322.5,311.25 L327.5,308.75 L332.5,306.9 L340,299.4 L345,292.5 L356.25,283.75 M340,299.4 L350,297.5 L365,296.25 M332.5,308 L341.25,310.6 L348.1,311.9"/>
<path d="M303.75,325 L305,331.25 L303.75,338.75 M306.9,326.25 L305,331 M322.5,330 L326.25,335 L331.25,325 M327.5,335 L327.5,343 M346.25,327.5 L360,324.4 M340,337.5 L355,337.5 M372.5,308.75 L372.5,318.75 M357.5,275 L361.25,280 L368.75,277.5"/>
<path d="M364.4,344.4 L371.25,348.75 L381.25,350 L388.75,350 L395,352.5 M370.6,351.25 L381.25,350 M350.6,349.4 L353.1,358.75"/>
<path d="M373.75,292.5 L378.75,288.75 L382.5,286.25 L385,281.25 M378.75,285 L382.5,286.25"/>
<path d="M434.8,209.9 L439.8,216.5 L448,225.6 M438.1,219.8 L439.8,216.5"/>
<path d="M440.6,233 L447.2,242.9 L449.7,251.2 L461.2,266 L464.5,272.6 L474.4,280.9 L484.3,285.8 L487.6,290 L490,300 L493,318 L496,335 L499,348 L502.5,358 M444.7,260.2 L452,265 L459.6,269.3 M475.2,243.7 L478.5,256.1 L477.7,269.3 L478.5,280.9 M467.8,253.6 L473.6,263.5 L477.7,266 M495.9,243.7 L494,249 M492.6,246.2 L500.8,262.7 L499.2,277.6 L494.2,285.8 L487.6,290 M507.4,254.5 L500.8,262.7 M514,274.3 L499.2,280.9 M473.75,297.5 L477.5,305 L487.5,310 M517.5,303 L507.5,318 L494,326 M515,330.5 L498,342 M455.5,289.4 L454,294 L451,299 L447.7,305.9"/>
<path d="M553.75,351.9 L560,356.25 L563.75,360 L564.4,366.25 L566,368 M561.25,352.5 L560,356.25 M580,351.25 L572.5,360 L565,365 M586.25,356.9 L583.75,363.75 L575,366.25"/>
<path d="M639.5,353.5 L649.5,356 L652,363.5 L647,367.25 L647,376 M652,363.5 L655.75,366 M627,386 L633.25,386 L634.5,383.5 L640.75,386 L642,398.5"/>
<path d="M619,476 L622.8,486.7 L629.1,493 L634.2,500.6 L641.8,503.8 M624,476 L625.3,485.4 M629.1,477.2 L626.6,486.7 M634.2,480.3 L630.4,489.2 L629.1,493 M615.2,488.6 L622.8,490.5 L629,492"/>
<path d="M700,270 L704,278 L708,286"/>
</g>
<path class="lake" d="M573,366 L566,372 L561,382 L558,390 L556,395 L559,393 L562,386 L566,378 L570,372 L575,368Z" style="stroke-width:1"/>
<path class="lake" d="M352.5,257 L355,253.75 L358.5,254 L360,257 L359,261 L356,263 L353,261Z"/>
<path class="lake" d="M330.5,54 L333,51.75 L336,52.5 L335,56.5 L331.5,57.5Z"/>
<path class="lake" d="M338,46 L340,45.5 L342,49 L343.5,53 L341,56.5 L339,53 L338.5,49Z"/>
<path class="lake" d="M460,323 L463.5,322.6 L463,328 L460,331.5 L459,328Z"/><path class="lake" d="M454.5,333 L456.5,332.5 L456,336 L454.5,336Z"/>
<path class="lake" d="M455,324 L458,323 L459,330 L456,335 L455,330Z" style="display:none"/>
<g class="isd">
<ellipse cx="393.5" cy="90" rx="1.5" ry="2"/><ellipse cx="390" cy="96.5" rx="1.4" ry="2.3"/><path d="M402,95.5 L404.5,94.7 L406.8,100 L406,105 L403,105.7 L402.5,100Z"/>
<!-- Iron islands -->
<path d="M292.5,229 L296,228 L300,230 L299,233 L301,236 L297,236 L293,234Z"/>
<ellipse cx="304.5" cy="225.5" rx="2.5" ry="1.5"/>
<ellipse cx="303" cy="230.5" rx="2" ry="1.5"/>
<path d="M307,230 L311,229 L313.5,232 L312,236 L308,235Z"/>
<path d="M295,236 L301,235 L304,237 L303,240 L297,240Z"/>
<path d="M296,262 L297,258 L300,255.6 L302,256.5 L301,260 L298,263.75Z"/>
<ellipse cx="303" cy="311.5" rx="3" ry="2.2"/>
<!-- Bite islands -->
<ellipse cx="361.8" cy="201" rx="1.8" ry="2.1"/><ellipse cx="366" cy="198.5" rx="1.6" ry="1.4"/><ellipse cx="370" cy="199.3" rx="1.9" ry="1.7"/>
<ellipse cx="382" cy="200.5" rx="2.4" ry="2"/>
<ellipse cx="398" cy="199" rx="2.5" ry="2"/>
<ellipse cx="402" cy="250.5" rx="1.8" ry="1.8"/>
<path d="M390,260 L395,259 L400,257.5 L400.6,261 L396,263 L391,265.6Z"/>
<ellipse cx="431" cy="279.3" rx="1.3" ry="1.3"/>
<!-- Stormlands / stepstones -->
<path d="M372.5,325 L376,324.4 L378.75,325.5 L377,327.5 L373,327Z"/>
<ellipse cx="385.6" cy="328.5" rx="1.9" ry="1.6"/>
<path d="M399,323 L401,319.5 L403,317 L404,319 L402,323 L399.5,324Z"/>
<ellipse cx="401" cy="321.8" rx="2" ry="1.6"/>
<path d="M403,332 L405,329 L408,329.5 L408,334 L404,335.6Z"/>
<path d="M409,330 L412,326 L416,325.6 L417,328 L413,331 L410,332Z"/>
<ellipse cx="414.5" cy="319.5" rx="1.6" ry="1.6"/>
<path d="M418,319 L422,316.5 L425,317 L423,320 L419,321Z"/>
<path d="M419,326 L422,324 L424,327 L422,330 L420,329Z"/>
<path d="M416,333 L419,331 L421,332 L420,335 L417,335.6Z"/>
<path d="M414,341 L417,338 L420,337.5 L419.5,342 L416,344.4 L414.5,344Z"/>
<path d="M421,337 L424,335.5 L426,337.5 L424,340 L421.5,340Z"/>
<ellipse cx="410" cy="344.3" rx="2" ry="1.8"/>
<ellipse cx="413.2" cy="333.8" rx="1.5" ry="1.2"/>
<ellipse cx="422.5" cy="343.3" rx="0.9" ry="0.9"/>
<path d="M432,357 L433,353 L436,351 L440,350 L440.6,354 L438,359 L435,361 L432.5,360Z"/>
<path d="M398.75,321 L402,320 L403,323 L399,323.75Z"/>
<!-- south islands -->
<ellipse cx="317" cy="423.3" rx="2.2" ry="1.7"/>
<path d="M311.5,428 L315,426.4 L319,427 L320,430 L318,433 L320,436.7 L316,436.7 L313,433Z"/>
<path d="M316,437 L322,438 L328,439 L327,441.4 L320,440.5 L316.5,439Z"/>
<path d="M322.5,425.5 L326,424 L328.6,427 L327,429.7 L324,428.5Z"/>
<ellipse cx="325" cy="432.2" rx="1.2" ry="1.2"/>
<path d="M339.3,436 L341,433.9 L344.5,438 L342.5,440 L340,439Z"/>
<ellipse cx="339.8" cy="445.4" rx="2.3" ry="1.6"/>
<path d="M314.5,447 L318,444.2 L322,446 L323,448.5 L319,451.2 L315.5,450Z"/>
<path d="M328.1,449 L331,446 L334.2,447.5 L333,451 L331.5,454 L328.5,452Z"/>
<ellipse cx="323.6" cy="446" rx="1.2" ry="1"/>
<!-- Essos NW islands -->
<path d="M462.5,216 L466,214 L469,215 L472,212.5 L475,214 L473,218 L468,220 L464,219Z"/>
<ellipse cx="434.5" cy="207.5" rx="1.6" ry="2.2"/>
<ellipse cx="458.7" cy="221.2" rx="1.2" ry="1.2"/>
<!-- Essos W islands -->
<path d="M420,334 L424,333.5 L426,337 L425,342 L421,345 L420,340Z"/>
<path d="M433,353 L436,350 L440,351 L439.5,356 L437,360 L433,358Z"/>
<path d="M472.5,353 L475,350 L477.5,352 L476,357 L473,356Z"/>
<ellipse cx="481.5" cy="357.5" rx="2.3" ry="2"/>
<ellipse cx="511.3" cy="358.5" rx="1.3" ry="1.3"/>
<path d="M547.5,377 L550,375 L554,377 L555,381 L551,382 L548,380Z"/>
<ellipse cx="584.2" cy="377.5" rx="1.6" ry="2.2"/>
<path d="M597.5,387 L601,385 L604,388 L607.5,392 L606,398 L602,397 L599,392Z"/>
<ellipse cx="625.5" cy="408" rx="2.5" ry="1.6"/>
<ellipse cx="625.8" cy="373" rx="1.3" ry="2"/>
<ellipse cx="593.3" cy="411.5" rx="1.3" ry="4"/>
<!-- Essos S island blobs -->
<path d="M544.7,405 L547,402.8 L548.5,406 L548,413.3 L545.5,412Z"/>
<ellipse cx="559.7" cy="408.7" rx="1.7" ry="1.7"/>
<ellipse cx="566.6" cy="411.2" rx="1.9" ry="1.6"/>
<ellipse cx="574.7" cy="408.5" rx="1.5" ry="1.5"/>
<ellipse cx="578.1" cy="422.8" rx="1.9" ry="1.9"/>
<ellipse cx="593.1" cy="409.5" rx="1.7" ry="2"/>
<ellipse cx="592.9" cy="415.4" rx="0.9" ry="0.8"/>
<ellipse cx="575" cy="416" rx="2.5" ry="3"/>
<!-- south forest islands -->
<path d="M550.5,492.5 L554.5,488.5 L556,484 L559.5,481.6 L564.5,483 L565,487 L561,489.5 L557,491 L553.5,495 L551,495.5Z"/>
<ellipse cx="568.5" cy="501.5" rx="1" ry="1"/><ellipse cx="570.5" cy="498.5" rx="1" ry="1"/><ellipse cx="572.8" cy="495.3" rx="1" ry="1"/>
<ellipse cx="584.8" cy="479.4" rx="2.5" ry="1.6"/>
<ellipse cx="584.8" cy="485.1" rx="1.9" ry="1.6"/>
<path d="M589.8,480 L594,478 L598,477.8 L597,482 L593,484.2 L590,483Z"/>
<path d="M590.5,470 L593,468.3 L596,470 L597.4,474 L594,475.9 L591,474Z"/>
<path d="M600,472 L603,469.6 L606.3,472 L605,478 L602,481 L599.3,478Z"/>
<ellipse cx="612" cy="471.5" rx="2" ry="1.9"/>
<ellipse cx="624.4" cy="471.1" rx="1.6" ry="1.6"/>
<ellipse cx="630.3" cy="469.9" rx="1.3" ry="0.9"/>
<path d="M635.5,472 L638,468 L640,465.8 L642.4,467 L641,471 L637,473.4Z"/>
<ellipse cx="622.7" cy="462.6" rx="2.5" ry="1.9"/>
<ellipse cx="617.7" cy="474.7" rx="1.3" ry="1.3"/>
<ellipse cx="613" cy="481.6" rx="1.5" ry="1.3"/>
<ellipse cx="590.4" cy="487" rx="1.2" ry="1.6"/>
<ellipse cx="598.7" cy="485.3" rx="1.3" ry="1.3"/>
<ellipse cx="586.4" cy="494" rx="1.6" ry="1.6"/>
<ellipse cx="583.5" cy="502.5" rx="1.3" ry="1.3"/>
</g>
<g class="isl"><path d="M510.6,94.4 L512.2,93.3 L514.4,95.2 L519,92.5 L525,92.2 L530.4,92.2 L535.7,92.5 L539.5,93.3 L540.3,90.3 L543.3,89.9 L545.6,92.9 L549.4,94.8 L547.1,97.1 L543.7,98.3 L542.6,104.3 L539.5,105.5 L538.4,102.4 L535.7,102.4 L530.4,107.4 L524.3,109.3 L521.3,110 L515.2,105.1 L511.4,100.5 L510.3,98.3Z" style="stroke-width:2.5"/></g>
<g class="isd">
<path d="M388.6,102.3 L392,100.8 L394.3,96.5 L397,94.8 L399.6,98.4 L400.6,103.2 L403.6,107 L402.8,111.2 L398.8,114.6 L394.5,114.6 L392,110.2 L388.8,106.2Z"/>
<path d="M397.3,292 L401.8,291.8 L405.5,295 L406.3,300 L404.5,303.5 L400.5,304.2 L397.5,301 L397,296Z"/>
<path d="M290.5,352.8 L292.3,354.2 L296.5,357.4 L299.2,360.6 L296.5,363.3 L293.7,364.7 L291.4,362.4 L290,356.5Z"/>
<path d="M327.5,437 L330.5,432 L333.5,426.8 L337.8,426 L339.3,428.7 L337.8,433 L338.6,440 L334.8,444.6 L328.4,444 Z"/>
<path d="M549.5,407.5 L556.1,408.5 L557.1,417.1 L556.1,422.8 L557.1,429.5 L555.2,432.4 L552.3,435.2 L548.5,431.4 L547.5,426.6 L549.5,420 L552.3,411.4Z"/>
<path d="M561.9,416.1 L566.6,415.2 L571.4,412.8 L574.3,417.1 L576.2,420.9 L574.3,429.5 L573.3,433.3 L576.2,437.1 L575.2,440.9 L569.5,440.5 L563.8,439.5 L561.4,436.2 L562.8,426.6 L561.9,420Z"/>
<path d="M580.9,410.4 L587.6,411.4 L590,415.2 L589.5,421.9 L585.7,429.5 L582.8,433.3 L580.5,430.4 L580.9,421.9 L580,415.2Z"/>
<path d="M629,423.5 L634,422.8 L639.5,423.5 L639.9,430.7 L635,430 L630,431 L629,427Z"/>
<ellipse cx="630.6" cy="433.8" rx="1.5" ry="1.5"/><ellipse cx="635.5" cy="432.3" rx="1.4" ry="1.5"/><ellipse cx="638.6" cy="431.4" rx="1.3" ry="1.3"/>
<path d="M600,485 L605,483.5 L610,486 L609.5,490 L604,491.5 L600.5,489.5Z"/>
<path d="M314.5,118 L318,115.8 L321,116.5 L324,115.8 L326,119 L325,123 L320,124 L315,123Z"/>
</g>
<g fill="#fff">
<path d="M391.6,103.5 L394.5,101.5 L396.5,98 L397.8,102 L398.5,106 L400.3,108.5 L399,111.8 L395.5,112 L393.5,108.5Z"/>
<ellipse cx="401.2" cy="298.2" rx="1.7" ry="2.8"/>
<path d="M293,358 L296,361 L293.5,363Z"/>
<path d="M332.3,442.8 L333,437 L335.5,434.3 L336.5,436 L334.8,438.5 L335,441Z"/>
<path d="M551.5,410.5 L554.5,410 L552.5,417 L551,421.5 L550.3,419 L551,414Z"/>
<path d="M564,418 L568,417.5 L571,415.5 L572.5,420 L572,428 L571,433 L572.5,437.5 L568,438 L565,437.5 L564.5,428 L564.5,422Z"/>
<path d="M583,419 L586,418.5 L585.5,424 L584,428 L583,425Z"/>
<path d="M631.4,425.6 L636.2,425.2 L636.2,427.6 L631.4,427.6Z"/>
<path d="M603,487 L606,486 L605.5,489 L603.5,489.5Z"/>
<path d="M318,119.5 L320,118.5 L322,119.5 L320.5,121Z"/>
</g>
</svg><svg class="abs" style="left:0;top:0" width="155" height="545">
<rect x="3" y="326" width="150" height="151" fill="#c4c4c4"/>
<clipPath id="ovc"><rect x="3" y="327" width="150" height="149"/></clipPath>
<g clip-path="url(#ovc)"><g transform="matrix(0.2924,0,0,0.2924,-74.8,319.2)"><path fill="#9db89a" d="M265.5,24 L363,24 L361,38 L360,48 L356,54 L351,59 L349,63 L350,70 L354,79 L360,83 L367.5,88 L377.5,92 L380,88.5 L382.5,92 L381,97 L377.5,103 L375,108 L377.5,118 L381,123 L395,123 L402.5,130.5 L400,139 L394,143 L387.5,145.5 L386,153 L384,159 L387.5,165 L391,173.75 L396,176 L391,178.75 L380,181 L378,187.5 L367.5,192.5 L360,191.25 L355,181.25 L352,177 L348.1,183 L348.1,198 L342.5,205 L348.1,212.5 L357.5,208.75 L367.5,205 L371,204 L382.5,202.5 L392.5,200 L390,203 L401,204.4 L395,209.4 L402.5,211 L400,216 L405,221 L398.75,222.5 L388.75,228.75 L401,230 L407.5,231 L402.5,235 L392.5,238 L390,242.5 L381,248.75 L370,250.6 L373.75,253.5 L386.25,252.5 L395,249 L401.25,245.5 L398.75,250 L392.5,257.5 L382.5,262.5 L377.5,267.5 L378.75,271 L371,277.5 L370,281 L385,281 L393.75,268.75 L396,273.75 L392.5,280 L391.25,283.75 L397.5,287.5 L395,293.75 L390,296.25 L391.25,302.5 L383.75,307.5 L381.25,310 L385,311.25 L388.75,310.6 L392.5,312 L397.5,310.6 L403.75,312.5 L400,316.25 L395,321 L393.75,325 L388.75,325 L382.5,321 L373.75,321.25 L361.25,323.75 L358.75,332.5 L357,335 L345,336.25 L357.5,337.5 L370,338.75 L377.5,340.6 L388.75,341.25 L397.5,337.5 L400,336.25 L403.75,338.75 L406.25,341.25 L403.75,345 L398.75,350 L395,353.75 L391.25,357.5 L377.5,358.75 L367.5,358.75 L357.5,360 L350,360.6 L337.5,361.9 L327.5,362.5 L322.5,360 L321.25,353.75 L315,354.4 L310,356.25 L305,355 L298.75,346.25 L302.5,340 L293.75,341.25 L291.25,332.5 L293.75,327.5 L298.75,322.5 L302.5,316.25 L310,311 L300,302.5 L295.6,296.8 L296.25,290 L298.75,282.5 L300,275 L297.5,273.75 L291.25,272.5 L293.75,268.75 L301.8,263.75 L304.4,257.5 L308.75,248.75 L306.8,243.75 L310,241 L317.5,239.4 L327.5,236.25 L332.5,232.5 L330,228.75 L323.75,227.5 L321.25,223.75 L327.5,218.75 L323.75,213.75 L321.25,210 L310,206.9 L298.75,207.5 L290,206.25 L288.75,203.75 L293.75,196.25 L302.5,196.25 L310,190 L321.25,190.6 L329,190.2 L331,188 L329,186 L311.25,187 L301.25,186.8 L296.25,181.25 L293.75,175 L289,172.5 L287.5,162.5 L288.3,164.4 L289.9,156.2 L296.5,151.2 L303.1,146.2 L304.8,138 L299,131.4 L299.8,128.9 L304.8,130.5 L308.9,136.3 L313,137.1 L321.3,133.8 L329.6,132.2 L332.9,128 L336.2,121.4 L334.5,113.2 L349,106.5 L361,104 L357.7,101.6 L349.4,104.9 L342.8,106.6 L336.2,103.3 L337.9,100 L332.9,98.3 L328,101.6 L322,106 L314.7,109.9 L306.4,104.4 L301.8,98.9 L294.4,98.9 L289.9,95.2 L290.8,89.7 L292.6,82.4 L291.7,76.9 L284.4,71.4 L277,65.9 L272.4,62.2 L265.5,57.6 L265.5,24Z"/><path fill="#9db89a" d="M433.2,207.4 L435.6,205.8 L437.3,211.6 L444.7,213.2 L452.1,212.4 L453,212.4 L455.4,216.5 L456.3,226.4 L458.7,234.7 L464.5,233 L467.8,228 L467,221.5 L472.8,223.1 L484.3,220.6 L490.9,228 L497.5,234.7 L500.8,226.4 L505,224.8 L506.6,232.2 L504.1,238 L507.4,243 L511.25,243.75 L520,241.25 L525,238.75 L537.5,245 L550,247.5 L556.25,246.25 L565,250 L575,255 L582.5,258.75 L592,260 L602,263.75 L599.5,268.75 L607,268.75 L612,263.75 L622,263.75 L635.75,267.5 L638.25,262.5 L634.5,255 L627,255 L634.5,250 L642,251.25 L652,253.75 L667,260 L679.5,263.75 L692,266.25 L702,268.75 L712,267.5 L722,272.5 L737,276.25 L752,275 L767,275 L778.25,277.5 L778.25,464 L767.25,466.4 L762.3,474 L759.8,484 L761,494 L749.8,496.3 L732.4,491.3 L722.4,485 L710,476.4 L695,474 L685,464 L677.5,459 L673.75,446.5 L670,436.5 L662.5,426.5 L649.5,423.5 L637,414.75 L627,406 L614.5,392.25 L609.5,383.5 L629.5,383.5 L628.25,371 L632,363.5 L639.5,354.75 L629.5,354.75 L612,358.5 L602,363.5 L592,371 L591.25,375 L588.75,371.25 L583.75,372.5 L580,380 L587.5,388.75 L592.5,393.5 L587.5,401 L585,406 L575,406 L562.5,401 L550,401 L555,391 L555,383.5 L545,373.5 L542.5,369.75 L537.5,361 L532.5,353.5 L527.5,348.5 L522.5,349.75 L515,353.5 L505,357.25 L495,359.75 L482.5,353.5 L473.4,350 L460.6,351.7 L455,350 L445.9,346.2 L436.7,342.6 L429.4,337 L423.9,329.7 L422,322.4 L427.5,320.6 L440.4,318.7 L448.6,315 L449.5,311.4 L443.1,308.6 L438.5,306.8 L430.3,303.1 L427.5,299.4 L429.4,296.7 L434.9,294 L438.5,287.5 L436.7,282 L429.4,273.8 L424.8,267.3 L422,260 L421.6,259.4 L424.9,252.8 L429.9,242.9 L434,224.8 L431.5,218.2Z"/><path fill="#9db89a" d="M759.8,484 L761,494 L749.8,496.3 L740,497 L733,502 L746,503 L757,511 L770,521 L777.3,536 L778.25,536 L778.25,464 L767.25,466.4 L762.3,474Z"/><path fill="#9db89a" d="M612,478 L620,474 L630,476 L640,479 L650,482 L658,484.5 L657.5,487 L647.5,484.7 L635,481 L625,477.5 L615,487Z"/><path fill="#9db89a" d="M562.5,537 L575,521.5 L585,509 L588.75,499 L593.75,489 L596.25,491.5 L598.75,496.5 L605,497.75 L611.25,494 L615,484 L617.5,476.5 L625,475.25 L635,479 L647.5,482.75 L657.5,485.25 L670,496.5 L690,504 L710,509 L720,510 L725,507.6 L731.1,503.3 L746.1,503.3 L757.3,511.3 L769.8,521.3 L774.8,528.8 L777.3,537Z"/></g></g>
<rect x="3" y="326" width="150" height="1" fill="#e02020"/>
<rect x="3" y="476" width="150" height="1" fill="#e02020"/>
<rect x="78" y="267" width="1" height="270" fill="#333"/>
<rect x="3" y="401" width="150" height="1" fill="#333"/>
</svg>
<div class="abs" style="left:3px;top:243px;width:150px;height:16px;background:#dcdcdc;border:1px solid #8a8a8a"></div>
<div class="abs" style="left:3px;top:243px;width:16px;height:16px;background:linear-gradient(#f8f8f8,#dcdcdc);border:1px solid #8a8a8a"></div>
<div class="abs" style="left:137px;top:243px;width:16px;height:16px;background:linear-gradient(#f8f8f8,#dcdcdc);border:1px solid #8a8a8a"></div>
<svg class="abs" style="left:3px;top:243px" width="150" height="16"><path d="M5.6 8 L9.8 3.8 L9.8 12.2Z" fill="#000"/><path d="M143.5 8 L139.5 4 L139.5 12Z" fill="#000"/></svg>
<div class="abs" style="left:18px;top:243px;width:18px;height:16px;background:linear-gradient(#eef3fa,#b9cde6);border:1px solid #5a5a5a"></div>
<svg class="abs" style="left:21px;top:246px" width="12" height="10" shape-rendering="crispEdges"><g fill="#555a60"><rect x="1" y="1" width="1" height="1"/><rect x="5" y="1" width="1" height="1"/><rect x="9" y="1" width="1" height="1"/><rect x="3" y="3" width="1" height="1"/><rect x="7" y="3" width="1" height="1"/><rect x="1" y="5" width="1" height="1"/><rect x="5" y="5" width="1" height="1"/><rect x="9" y="5" width="1" height="1"/><rect x="3" y="7" width="1" height="1"/><rect x="7" y="7" width="1" height="1"/><rect x="1" y="9" width="1" height="1"/><rect x="5" y="9" width="1" height="1"/><rect x="9" y="9" width="1" height="1"/></g><g fill="#fff"><rect x="0" y="0" width="1" height="1"/><rect x="4" y="0" width="1" height="1"/><rect x="8" y="0" width="1" height="1"/><rect x="2" y="2" width="1" height="1"/><rect x="6" y="2" width="1" height="1"/><rect x="0" y="4" width="1" height="1"/><rect x="4" y="4" width="1" height="1"/><rect x="8" y="4" width="1" height="1"/><rect x="2" y="6" width="1" height="1"/><rect x="6" y="6" width="1" height="1"/><rect x="0" y="8" width="1" height="1"/><rect x="4" y="8" width="1" height="1"/><rect x="8" y="8" width="1" height="1"/></g></svg>
<div class="abs" style="left:3px;top:261px;width:151px;height:5px;background:#e0e0e0"></div>
<div class="abs" style="left:3px;top:266px;width:151px;height:1px;background:#808080"></div>

<div id="split" class="abs"></div>
<div id="splitl" class="abs"></div>
<div id="bline" class="abs"></div>
<div id="bottom" class="abs"></div>
<svg class="abs" style="left:0;top:539px" width="789" height="6"><path d="M190,0 L379,0 Q381,3 379,6 L184,6Z" fill="#48ac78"/><rect x="184" y="5" width="195" height="1" fill="#b8e0b0"/><rect x="416" y="0" width="1" height="6" fill="#e8e8e8"/><rect x="417" y="0" width="372" height="6" fill="#a6c6ee"/></svg>
</body></html>
